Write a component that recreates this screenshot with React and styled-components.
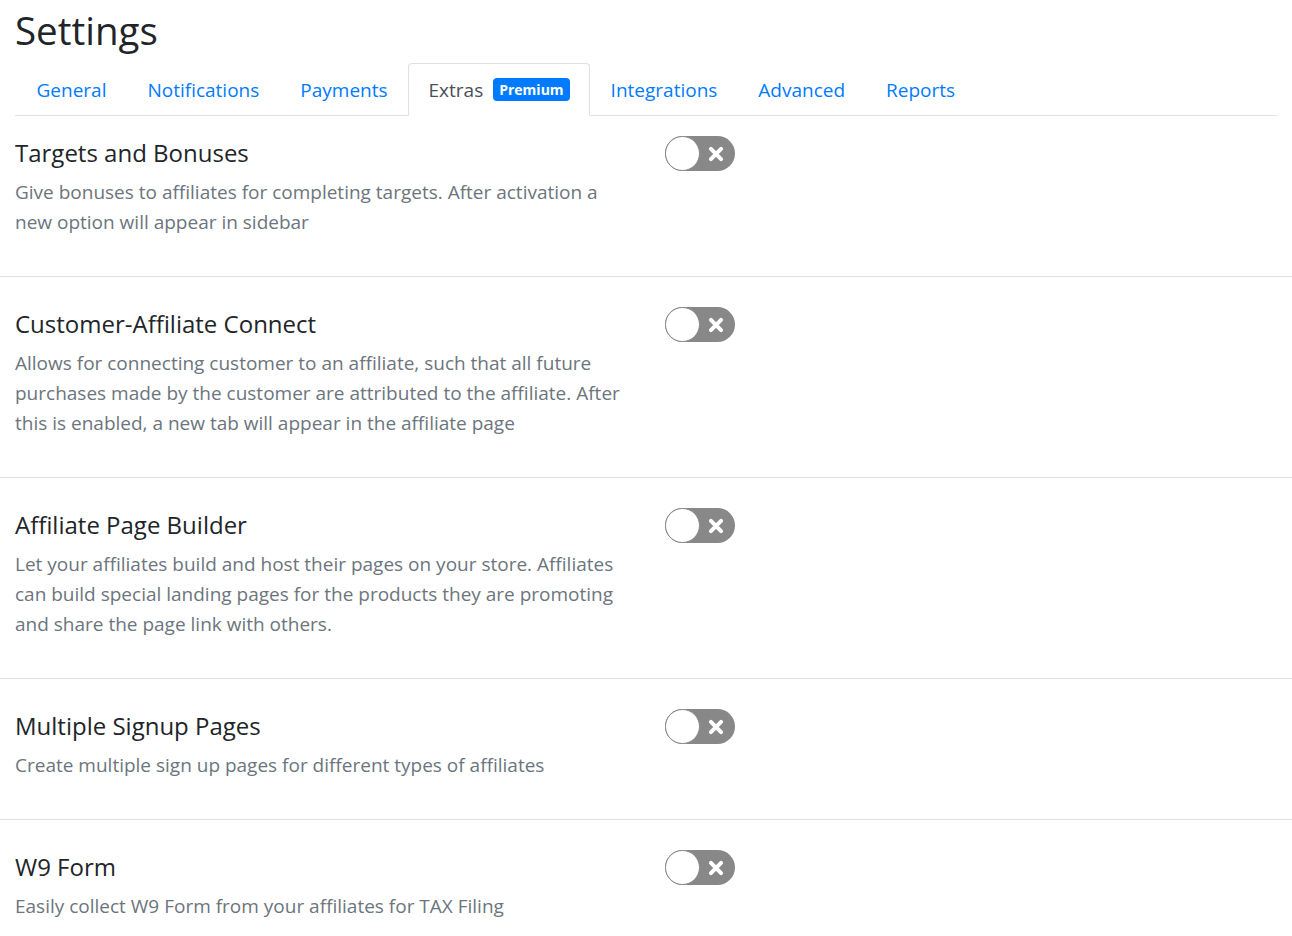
import React, { useState } from 'react'
import styled, { createGlobalStyle } from 'styled-components'

const GlobalStyle = createGlobalStyle`
  html, body {
    margin: 0;
    padding: 0;
    background: #fff;
  }
  body {
    font-family: "Open Sans", "Noto Sans", Arial, sans-serif;
    color: #212529;
  }
`

const tabs = ['General', 'Notifications', 'Payments', 'Extras', 'Integrations', 'Advanced', 'Reports']

const features = [
  {
    title: 'Targets and Bonuses',
    text: 'Give bonuses to affiliates for completing targets. After activation a new option will appear in sidebar',
  },
  {
    title: 'Customer-Affiliate Connect',
    text: 'Allows for connecting customer to an affiliate, such that all future purchases made by the customer are attributed to the affiliate. After this is enabled, a new tab will appear in the affiliate page',
  },
  {
    title: 'Affiliate Page Builder',
    text: 'Let your affiliates build and host their pages on your store. Affiliates can build special landing pages for the products they are promoting and share the page link with others.',
  },
  {
    title: 'Multiple Signup Pages',
    text: 'Create multiple sign up pages for different types of affiliates',
  },
  {
    title: 'W9 Form',
    text: 'Easily collect W9 Form from your affiliates for TAX Filing',
  },
]

export default function App() {
  const [active, setActive] = useState('Extras')
  const [enabled, setEnabled] = useState({})

  return (
    <Page>
      <GlobalStyle />
      <Heading>Settings</Heading>
      <TabList>
        {tabs.map((tab) => (
          <Tab key={tab} $active={tab === active} onClick={() => setActive(tab)}>
            {tab}
            {tab === 'Extras' && <Badge>Premium</Badge>}
          </Tab>
        ))}
      </TabList>
      <div>
        {features.map((f) => (
          <Section key={f.title}>
            <TextCol>
              <Title>{f.title}</Title>
              <Description>{f.text}</Description>
            </TextCol>
            <Toggle
              $on={!!enabled[f.title]}
              onClick={() => setEnabled({ ...enabled, [f.title]: !enabled[f.title] })}
            >
              <Knob $on={!!enabled[f.title]} />
              <CrossIcon viewBox="0 0 16 16">
                <path d="M3.5 3.5 L12.5 12.5 M12.5 3.5 L3.5 12.5" />
              </CrossIcon>
            </Toggle>
          </Section>
        ))}
      </div>
    </Page>
  )
}

const Page = styled.div`
  width: 1292px;
  min-height: 936px;
  padding-top: 7px;
  box-sizing: border-box;
`

const Heading = styled.h1`
  margin: 0 0 0 15px;
  font-size: 38.5px;
  line-height: 46px;
  font-weight: 400;
  color: #212529;
`

const TabList = styled.ul`
  display: flex;
  list-style: none;
  margin: 10px 15px 0 15px;
  padding: 0 0 0 1px;
  border-bottom: 1px solid #dee2e6;
`

const Tab = styled.li`
  display: flex;
  align-items: center;
  height: 51px;
  padding: 0 19.5px;
  margin-bottom: -1px;
  font-size: 19px;
  cursor: pointer;
  color: ${(p) => (p.$active ? '#495057' : '#007bff')};
  background: ${(p) => (p.$active ? '#fff' : 'transparent')};
  border: 1px solid ${(p) => (p.$active ? '#dee2e6' : 'transparent')};
  border-bottom-color: ${(p) => (p.$active ? '#fff' : 'transparent')};
  border-radius: 4px 4px 0 0;
`

const Badge = styled.span`
  display: inline-flex;
  align-items: center;
  height: 23px;
  margin-left: 10px;
  padding: 0 6px;
  background: #007bff;
  color: #fff;
  font-size: 14px;
  font-weight: 700;
  border-radius: 4px;
`

const Section = styled.div`
  display: flex;
  align-items: flex-start;
  padding: 32px 0 39px 15px;
  border-bottom: 1px solid #dee2e6;

  &:first-child {
    padding-top: 22px;
  }
  &:last-child {
    border-bottom: none;
  }
`

const TextCol = styled.div`
  width: 615px;
  flex-shrink: 0;
`

const Title = styled.div`
  font-size: 24px;
  line-height: 29px;
  color: #212529;
`

const Description = styled.div`
  margin-top: 10px;
  font-size: 19px;
  line-height: 30px;
  color: #6c757d;
`

const Toggle = styled.div`
  position: relative;
  display: flex;
  align-items: center;
  justify-content: flex-end;
  width: 70px;
  height: 35px;
  margin: -2px 0 0 35px;
  padding-right: 10px;
  box-sizing: border-box;
  border-radius: 18px;
  background: ${(p) => (p.$on ? '#007bff' : '#888')};
  cursor: pointer;
`

const Knob = styled.span`
  position: absolute;
  top: 0;
  left: ${(p) => (p.$on ? '35px' : '0')};
  width: 35px;
  height: 35px;
  box-sizing: border-box;
  border-radius: 50%;
  background: #fff;
  border: 1px solid #888;
`

const CrossIcon = styled.svg`
  width: 18px;
  height: 18px;
  fill: none;
  stroke: #fff;
  stroke-width: 3.6;
  stroke-linecap: round;
`
